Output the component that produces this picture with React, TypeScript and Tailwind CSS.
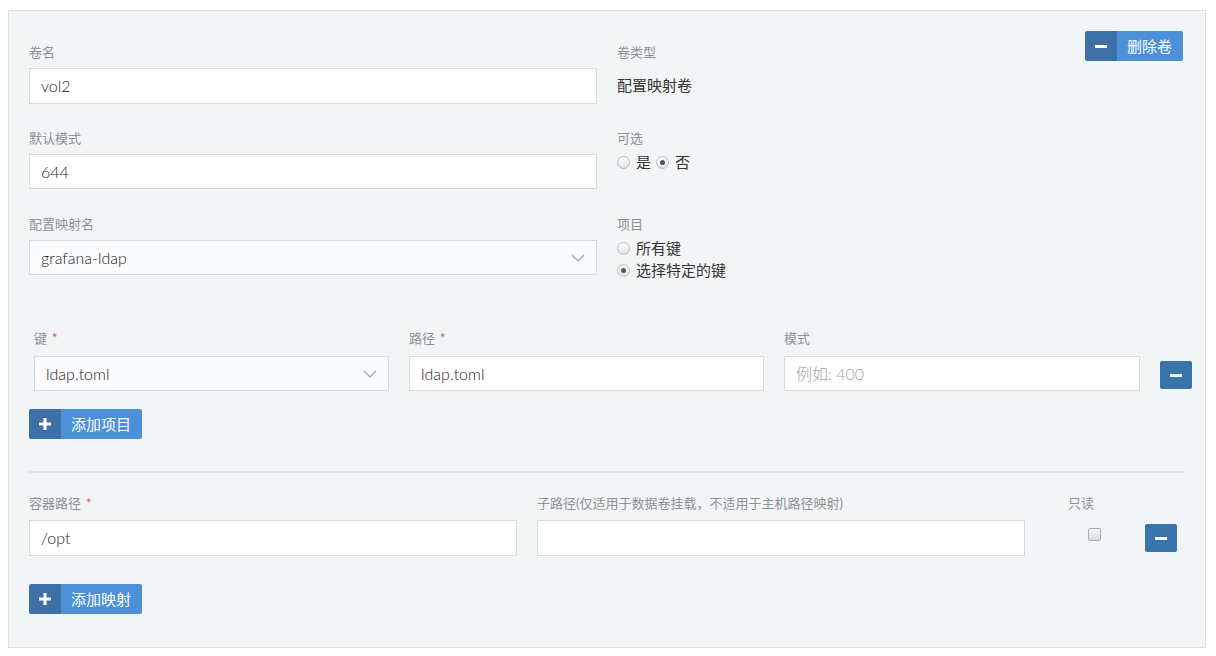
import React from "react";

const font = { fontFamily: 'Lato, "Noto Sans CJK SC", sans-serif' };

function Label({ text, required }: { text: string; required?: boolean }) {
  return (
    <div className="h-[20px] leading-[20px] text-[13px] text-[#8c9196]">
      {text}
      {required && <span className="ml-[5px] text-[#d9534f]">*</span>}
    </div>
  );
}

function Input({ value, placeholder, tall }: { value?: string; placeholder?: string; tall?: boolean }) {
  return (
    <div
      className={`flex items-center px-[11px] bg-white border border-[#d6dadd] text-[16px] font-light text-[#1f2124] ${
        tall ? "h-[36px]" : "h-[35px]"
      }`}
    >
      {value ? value : <span className="text-[#9ea2a6]">{placeholder}</span>}
    </div>
  );
}

function Select({ value }: { value: string }) {
  return (
    <div className="flex items-center justify-between pl-[11px] pr-[11px] h-[35px] bg-[#fbfcfd] border border-[#d6dadd] text-[16px] font-light text-[#1f2124]">
      <span>{value}</span>
      <svg width="14" height="8" viewBox="0 0 14 8" fill="none">
        <polyline points="1,1 7,7 13,1" stroke="#9aa0a6" strokeWidth="1.2" />
      </svg>
    </div>
  );
}

function Radio({ checked, label }: { checked?: boolean; label: string }) {
  return (
    <div className="flex items-center gap-[6px] h-[22px] text-[15px] text-[#333]">
      <span className="flex items-center justify-center w-[13px] h-[13px] rounded-full border border-[#b9bdc1] bg-gradient-to-b from-white to-[#dfe2e4]">
        {checked && <span className="w-[5px] h-[5px] rounded-full bg-[#555]" />}
      </span>
      <span>{label}</span>
    </div>
  );
}

function MinusBtn() {
  return (
    <div className="flex items-center justify-center w-[32px] h-[28px] rounded-[2px] bg-[#3873ab]">
      <span className="w-[12px] h-[3px] bg-white" />
    </div>
  );
}

function SplitBtn({ icon, text }: { icon: "plus" | "minus"; text: string }) {
  return (
    <div className="flex h-[30px] text-[15px] text-white">
      <div className="flex items-center justify-center w-[32px] bg-[#3e70a7] rounded-l-[2px]">
        {icon === "plus" ? (
          <svg width="12" height="12" viewBox="0 0 12 12">
            <rect x="4.5" y="0" width="3" height="12" fill="white" />
            <rect x="0" y="4.5" width="12" height="3" fill="white" />
          </svg>
        ) : (
          <span className="w-[12px] h-[3px] bg-white" />
        )}
      </div>
      <div className="flex items-center pl-[10px] pr-[11px] bg-[#4b90d8] rounded-r-[2px]">{text}</div>
    </div>
  );
}

export default function App() {
  return (
    <div className="w-[1216px] h-[656px] bg-white pl-[8px] pt-[10px] pr-[10px]" style={font}>
      <div className="h-[638px] border border-[#dde1e4] bg-[#f2f5f6] px-[20px] pt-[20px]">
        {/* volume row 1 */}
        <div className="grid grid-cols-2 gap-x-[20px]">
          <div className="pt-[11px]">
            <Label text="卷名" />
            <div className="mt-[6px]">
              <Input value="vol2" tall />
            </div>
          </div>
          <div className="flex justify-between items-start">
            <div className="pt-[11px]">
              <Label text="卷类型" />
              <div className="mt-[12px] text-[15px] text-[#333]">配置映射卷</div>
            </div>
            <div className="mr-[2px]">
              <SplitBtn icon="minus" text="删除卷" />
            </div>
          </div>
        </div>

        {/* row 2 */}
        <div className="grid grid-cols-2 gap-x-[20px] mt-[24px]">
          <div>
            <Label text="默认模式" />
            <div className="mt-[6px]">
              <Input value="644" />
            </div>
          </div>
          <div>
            <Label text="可选" />
            <div className="flex gap-[5px] mt-[3px]">
              <Radio label="是" />
              <Radio checked label="否" />
            </div>
          </div>
        </div>

        {/* row 3 */}
        <div className="grid grid-cols-2 gap-x-[20px] mt-[25px]">
          <div>
            <Label text="配置映射名" />
            <div className="mt-[6px]">
              <Select value="grafana-ldap" />
            </div>
          </div>
          <div>
            <Label text="项目" />
            <div className="mt-[3px]">
              <Radio label="所有键" />
              <Radio checked label="选择特定的键" />
            </div>
          </div>
        </div>

        {/* items */}
        <div className="flex items-start pl-[5px] mt-[47px]">
          <div className="w-[355px] shrink-0">
            <Label text="键" required />
            <div className="mt-[8px]">
              <Select value="ldap.toml" />
            </div>
          </div>
          <div className="w-[355px] shrink-0 ml-[20px]">
            <Label text="路径" required />
            <div className="mt-[8px]">
              <Input value="ldap.toml" />
            </div>
          </div>
          <div className="w-[356px] shrink-0 ml-[20px]">
            <Label text="模式" />
            <div className="mt-[8px]">
              <Input placeholder="例如: 400" />
            </div>
          </div>
          <div className="ml-[20px] mt-[33px] shrink-0">
            <MinusBtn />
          </div>
        </div>

        <div className="mt-[18px] flex">
          <SplitBtn icon="plus" text="添加项目" />
        </div>

        <div className="mt-[32px] h-[2px] bg-[#dfe6ea]" />

        {/* mounts */}
        <div className="flex items-start mt-[20px]">
          <div className="w-[488px] shrink-0">
            <Label text="容器路径" required />
            <div className="mt-[7px]">
              <Input value="/opt" tall />
            </div>
          </div>
          <div className="w-[488px] shrink-0 ml-[20px]">
            <Label text="子路径(仅适用于数据卷挂载，不适用于主机路径映射)" />
            <div className="mt-[7px]">
              <Input tall />
            </div>
          </div>
          <div className="ml-[43px] flex flex-col items-start shrink-0">
            <Label text="只读" />
            <span className="mt-[15px] ml-[20px] w-[13px] h-[13px] rounded-[2px] border border-[#a9adb1] bg-gradient-to-b from-[#f4f4f4] to-[#d8dbdd]" />
          </div>
          <div className="ml-[44px] mt-[31px] shrink-0">
            <MinusBtn />
          </div>
        </div>

        <div className="mt-[28px] flex">
          <SplitBtn icon="plus" text="添加映射" />
        </div>
      </div>
    </div>
  );
}
